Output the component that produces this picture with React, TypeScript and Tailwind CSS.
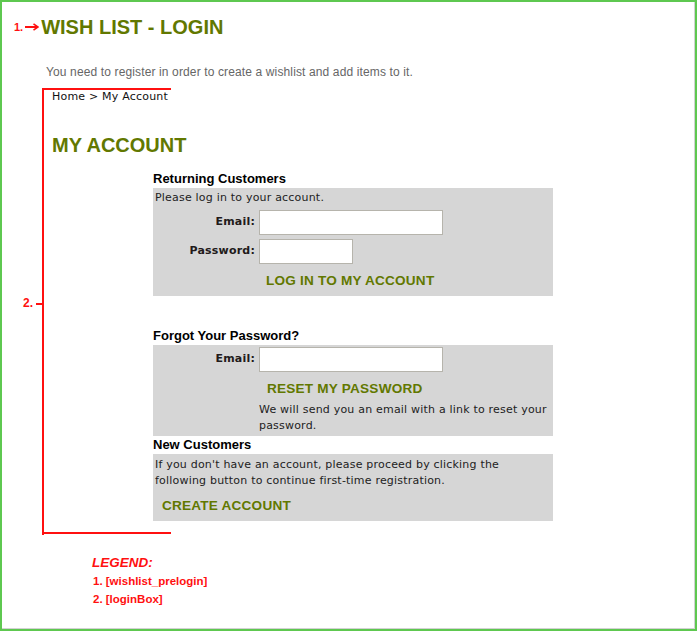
const arial = "font-['Liberation_Sans',Arial,sans-serif]";
const verdana = "font-['DejaVu_Sans',Verdana,sans-serif] tracking-[0.2px]";

function Field({ label, wide }: { label: string; wide?: boolean }) {
  return (
    <div className="flex items-center">
      <label className={`w-[100px] text-right text-[11px] font-bold text-[#221a1a] ${verdana}`}>
        {label}
      </label>
      <input
        type={label === "Password:" ? "password" : "text"}
        className={`ml-[4px] h-[25px] border border-[#b6b4ac] bg-white outline-none ${wide ? "w-[184px]" : "w-[94px]"}`}
      />
    </div>
  );
}

function ActionLink({ children, className = "" }: { children: string; className?: string }) {
  return (
    <div className={`text-[13.6px] leading-[18px] font-bold text-[#627800] ${arial} ${className}`}>
      {children}
    </div>
  );
}

function SectionTitle({ children, className = "" }: { children: string; className?: string }) {
  return (
    <h2 className={`text-[13px] leading-[18px] font-bold text-black ${arial} ${className}`}>{children}</h2>
  );
}

export default function App() {
  return (
    <div className="relative box-border w-[697px] h-[631px] border-2 border-[#5ec850] bg-white shadow-[inset_-1px_-1px_0_#d2d2d2]">
      {/* wishlist_prelogin */}
      <div className="mt-[13px] pl-[12px] flex items-center h-[24px]">
        <span className={`text-[11px] font-bold text-[#ff1010] ${arial}`}>1.</span>
        <svg width="14" height="8" viewBox="0 0 14 8" className="ml-[2px]">
          <line x1="0" y1="4" x2="12" y2="4" stroke="#ff1010" strokeWidth="2" />
          <path d="M8.5 0.8 L13 4 L8.5 7.2" fill="none" stroke="#ff1010" strokeWidth="1.6" />
        </svg>
        <h1 className={`ml-[2px] text-[20px] leading-[24px] font-bold text-[#627800] ${arial}`}>
          WISH LIST - LOGIN
        </h1>
      </div>
      <p className={`mt-[25px] ml-[44px] text-[12px] leading-[16px] tracking-[0.13px] text-[#666] ${arial}`}>
        You need to register in order to create a wishlist and add items to it.
      </p>

      {/* loginBox */}
      <div className="ml-[50px] mt-[10px]">
        <div className={`text-[11px] leading-[14px] text-[#111] ${verdana}`}>Home &gt; My Account</div>
        <div className={`mt-[29px] text-[20px] leading-[24px] font-bold text-[#627800] ${arial}`}>MY ACCOUNT</div>

        <div className="ml-[101px] w-[400px]">
          <SectionTitle className="mt-[13px]">Returning Customers</SectionTitle>
          <div className={`bg-[#d6d6d6] pt-[3px] pl-[2px] pb-[6px] text-[11px] text-[#222] ${verdana}`}>
            <div className="leading-[14px]">Please log in to your account.</div>
            <div className="mt-[5px] flex flex-col gap-[4px]">
              <Field label="Email:" wide />
              <Field label="Password:" />
            </div>
            <ActionLink className="mt-[8px] ml-[111px]">LOG IN TO MY ACCOUNT</ActionLink>
          </div>

          <SectionTitle className="mt-[31px]">Forgot Your Password?</SectionTitle>
          <div className={`bg-[#d6d6d6] pt-[2px] pl-[2px] pb-[2px] text-[11px] text-[#222] ${verdana}`}>
            <Field label="Email:" wide />
            <ActionLink className="mt-[8px] ml-[112px]">RESET MY PASSWORD</ActionLink>
            <div className="mt-[4px] ml-[104px] leading-[16px] whitespace-nowrap">
              We will send you an email with a link to reset your
              <br />
              password.
            </div>
          </div>

          <SectionTitle>New Customers</SectionTitle>
          <div className={`bg-[#d6d6d6] pt-[3px] pl-[2px] pb-[6px] text-[11px] text-[#222] ${verdana}`}>
            <div className="leading-[16px] whitespace-nowrap">
              If you don't have an account, please proceed by clicking the
              <br />
              following button to continue first-time registration.
            </div>
            <ActionLink className="mt-[8px] ml-[7px]">CREATE ACCOUNT</ActionLink>
          </div>
        </div>
      </div>

      {/* legend */}
      <div className={`mt-[33px] ml-[90px] text-[#ff1010] ${arial}`}>
        <div className="text-[13.5px] leading-[18px] font-bold italic">LEGEND:</div>
        <div className="ml-[1px] text-[11.5px] leading-[18px] font-bold">1. [wishlist_prelogin]</div>
        <div className="ml-[1px] text-[11.5px] leading-[18px] font-bold">2. [loginBox]</div>
      </div>

      {/* loginBox bracket annotation */}
      <div className="absolute left-[40px] top-[86px] w-[2px] h-[447px] bg-[#ff1010]" />
      <div className="absolute left-[40px] top-[86px] w-[129px] h-[2px] bg-[#ff1010]" />
      <div className="absolute left-[40px] top-[530px] w-[129px] h-[2px] bg-[#ff1010]" />
      <div className="absolute left-[34px] top-[301px] w-[6px] h-[2px] bg-[#ff1010]" />
      <span className={`absolute left-[21px] top-[293px] text-[12px] leading-[16px] font-bold text-[#ff1010] ${arial}`}>
        2.
      </span>
    </div>
  );
}
